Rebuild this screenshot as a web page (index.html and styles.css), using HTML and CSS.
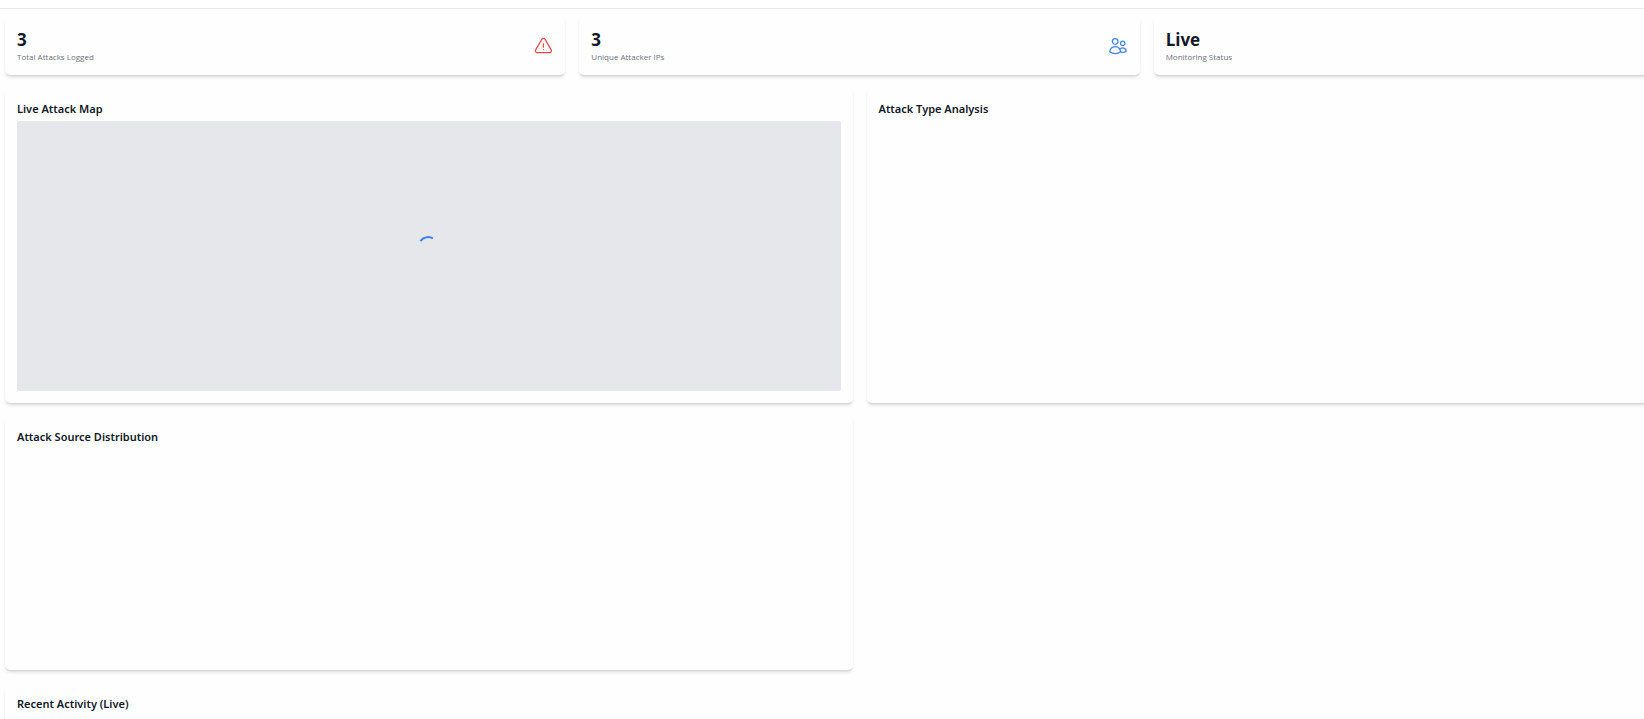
FILE: index.html
```html
<!DOCTYPE html>
<html lang="en">
<head>
<meta charset="utf-8">
<title>Attack Dashboard</title>
<link rel="stylesheet" href="styles.css">
</head>
<body>
<header class="topbar"></header>
<main class="dashboard">
  <section class="stats">
    <article class="card stat">
      <div>
        <p class="stat-value">3</p>
        <p class="stat-label">Total Attacks Logged</p>
      </div>
      <svg class="icon icon-alert" viewBox="0 0 24 24" aria-hidden="true">
        <path d="M12.5 9.500v3.750m-9.300 3.380c-.87 1.500.21 3.370 1.950 3.370h14.700c1.740 0 2.820-1.870 1.950-3.370L14.450 3.880c-.87-1.500-3.030-1.500-3.900 0L3.200 16.630zM12.5 16.250h.01v.01H12.5z"/>
      </svg>
    </article>
    <article class="card stat">
      <div>
        <p class="stat-value">3</p>
        <p class="stat-label">Unique Attacker IPs</p>
      </div>
      <svg class="icon icon-users" viewBox="0 0 24 24" aria-hidden="true">
        <path d="M15 19.13a9.4 9.4 0 0 0 2.63.37 9.3 9.3 0 0 0 4.12-.95 4.13 4.13 0 0 0-7.53-2.5M15 19.13v-.01c0-1.11-.29-2.16-.79-3.07M15 19.13v.1A12.3 12.3 0 0 1 8.62 21c-2.33 0-4.51-.65-6.37-1.77v-.11a6.38 6.38 0 0 1 11.96-3.07M12 6.38a3.38 3.38 0 1 1-6.75 0 3.38 3.38 0 0 1 6.75 0zm8.25 2.25a2.63 2.63 0 1 1-5.25 0 2.63 2.63 0 0 1 5.25 0z"/>
      </svg>
    </article>
    <article class="card stat">
      <div>
        <p class="stat-value">Live</p>
        <p class="stat-label">Monitoring Status</p>
      </div>
    </article>
  </section>
  <section class="panels">
    <article class="card">
      <h2 class="card-title">Live Attack Map</h2>
      <div class="map"><div class="spinner" role="status" aria-label="Loading"></div></div>
    </article>
    <article class="card">
      <h2 class="card-title">Attack Type Analysis</h2>
    </article>
    <article class="card">
      <h2 class="card-title">Attack Source Distribution</h2>
      <div class="chart"></div>
    </article>
  </section>
  <section class="card activity">
    <h2 class="card-title">Recent Activity (Live)</h2>
  </section>
</main>
</body>
</html>
```
FILE: styles.css
```css
* {
  box-sizing: border-box;
}

html {
  overflow: hidden;
}

body {
  height: 100vh;
  margin: 0;
  overflow: hidden;
  background: #fefefe;
  color: #111827;
  font-family: "Open Sans", "Noto Sans", sans-serif;
}

p,
h2 {
  margin: 0;
}

.topbar {
  height: 9px;
  background: #fff;
  border-bottom: 1px solid #e5e7eb;
}

/* The dashboard runs past the right edge of the viewport. */
.dashboard {
  display: flex;
  flex-direction: column;
  gap: 14px;
  margin-right: -70px;
  padding: 8px 0 0 5px;
}

.stats,
.panels {
  display: grid;
  gap: 14px;
}

.stats {
  grid-template-columns: repeat(3, 1fr);
}

.panels {
  grid-template-columns: repeat(2, 1fr);
}

.card {
  padding: 12px;
  background: #fefefe;
  border-radius: 5px;
  box-shadow: 0 3px 4px -1px rgba(0, 0, 0, 0.12), 0 2px 2px -1px rgba(0, 0, 0, 0.1);
}

.stat {
  display: flex;
  align-items: center;
  justify-content: space-between;
}

.stat-value {
  font-size: 17px;
  font-weight: 700;
  line-height: 22px;
}

.stat-label {
  color: #6b7280;
  font-size: 8px;
  line-height: 12px;
}

.icon {
  width: 20px;
  height: 20px;
  fill: none;
  stroke: currentColor;
  stroke-width: 1.5;
  stroke-linecap: round;
  stroke-linejoin: round;
}

.icon-alert {
  color: #ef4444;
}

.icon-users {
  color: #3b82f6;
}

.card-title {
  margin-bottom: 4px;
  font-family: "Noto Sans", "Open Sans", sans-serif;
  font-size: 11px;
  font-weight: 600;
  line-height: 16px;
}

.map {
  display: flex;
  align-items: center;
  justify-content: center;
  height: 270px;
  padding: 0 2px 20px 0;
  background: #e5e7eb;
  border-radius: 2px;
}

.spinner {
  width: 20px;
  height: 20px;
  border: 2px solid transparent;
  border-top-color: #3b82f6;
  border-radius: 50%;
  transform: rotate(-12deg);
}

.chart {
  height: 209px;
}
```
